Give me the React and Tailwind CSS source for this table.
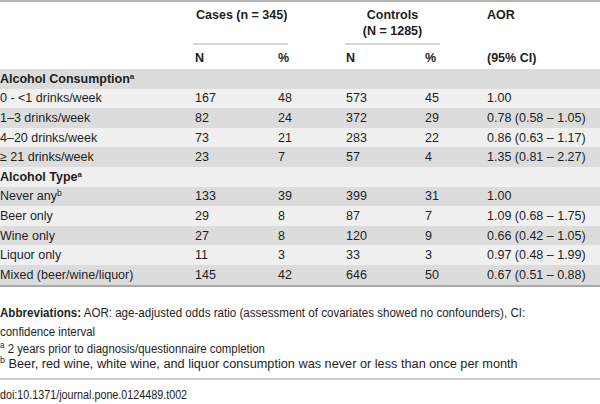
import React from "react";

const rows = [
  { label: "Alcohol Consumption", sup: "a", section: true },
  { label: "0 - <1 drinks/week", v: ["167", "48", "573", "45", "1.00"] },
  { label: "1–3 drinks/week", v: ["82", "24", "372", "29", "0.78 (0.58 – 1.05)"] },
  { label: "4–20 drinks/week", v: ["73", "21", "283", "22", "0.86 (0.63 – 1.17)"] },
  { label: "≥ 21 drinks/week", v: ["23", "7", "57", "4", "1.35 (0.81 – 2.27)"] },
  { label: "Alcohol Type", sup: "a", section: true },
  { label: "Never any", supN: "b", v: ["133", "39", "399", "31", "1.00"] },
  { label: "Beer only", v: ["29", "8", "87", "7", "1.09 (0.68 – 1.75)"] },
  { label: "Wine only", v: ["27", "8", "120", "9", "0.66 (0.42 – 1.05)"] },
  { label: "Liquor only", v: ["11", "3", "33", "3", "0.97 (0.48 – 1.99)"] },
  { label: "Mixed (beer/wine/liquor)", v: ["145", "42", "646", "50", "0.67 (0.51 – 0.88)"] },
];

const cols = "grid grid-cols-[195px_83px_68px_79px_62px_1fr]";

export default function App() {
  return (
    <div className="w-[600px] h-[404px] bg-white text-[12.5px] text-[#1e1e1e] overflow-hidden font-['Liberation_Sans',Arial,sans-serif]">
      <div className="border-t-2 border-[#b4b4b4]">
        {/* header row 1 */}
        <div className={`${cols} h-[43px] font-bold`}>
          <div />
          <div className="col-span-2">
            <div className="w-[95px] -ml-[2px] h-full flex flex-col">
              <div className="pt-[6px] leading-[14px] pl-[3px] whitespace-nowrap">Cases (n = 345)</div>
              <div className="flex-1" />
              <div className="border-b-2 border-[#d6d6d6]" />
            </div>
          </div>
          <div className="col-span-2">
            <div className="w-[95px] -ml-[1px] h-full flex flex-col">
              <div className="pt-[5px] leading-[16px] text-center">
                <div>Controls</div>
                <div>(N = 1285)</div>
              </div>
              <div className="flex-1" />
              <div className="border-b-2 border-[#d6d6d6]" />
            </div>
          </div>
          <div className="pt-[6px] leading-[14px]">AOR</div>
        </div>
        {/* header row 2 */}
        <div className={`${cols} h-[24px] font-bold leading-[14px] pt-[6px]`}>
          <div />
          <div>N</div>
          <div>%</div>
          <div>N</div>
          <div>%</div>
          <div>(95% CI)</div>
        </div>
        {/* body */}
        <div className="border-b-2 border-[#a9a9a9]">
          {rows.map((r, i) => (
            <div
              key={i}
              className={`${cols} h-[19.6px] items-center leading-[14px] ${i % 2 === 0 ? "bg-[#dcdcdc]" : "bg-[#f0f0f0]"}`}
            >
              {r.section ? (
                <div className="col-span-6 font-bold">
                  {r.label}
                  <sup className="text-[8px] leading-none">{r.sup}</sup>
                </div>
              ) : (
                <>
                  <div className="whitespace-nowrap">
                    {r.label}
                    {r.supN && <sup className="text-[8.5px] leading-none">{r.supN}</sup>}
                  </div>
                  {r.v.map((x, j) => (
                    <div key={j} className="whitespace-nowrap">{x}</div>
                  ))}
                </>
              )}
            </div>
          ))}
        </div>
      </div>
      {/* footer */}
      <div className="pt-[17px] text-[12px] whitespace-nowrap">
        <div className="leading-[19px] origin-left scale-x-[0.965]">
          <span className="font-bold">Abbreviations:</span> AOR: age-adjusted odds ratio (assessment of covariates showed no confounders), CI:
        </div>
        <div className="leading-[19px] origin-left scale-x-[0.95]">confidence interval</div>
        <div className="leading-[15px] origin-left scale-x-[0.95]">
          <sup className="text-[8.5px] leading-none">a</sup> 2 years prior to diagnosis/questionnaire completion
        </div>
        <div className="leading-[14px] origin-left scale-x-[1.06]">
          <sup className="text-[8.5px] leading-none">b</sup> Beer, red wine, white wine, and liquor consumption was never or less than once per month
        </div>
      </div>
      <div className="mt-[7px] border-t-2 border-[#cfcfcf]" />
      <div className="pt-[8px] leading-[14px] whitespace-nowrap origin-left scale-x-[0.86]">
        doi:10.1371/journal.pone.0124489.t002
      </div>
    </div>
  );
}
